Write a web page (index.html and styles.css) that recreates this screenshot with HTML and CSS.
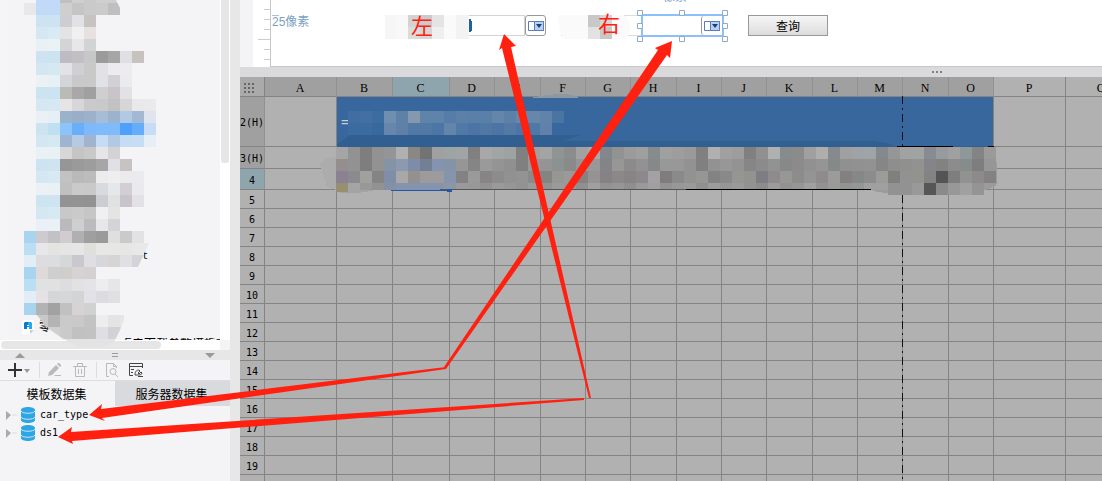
FILE: index.html
```html
<!DOCTYPE html>
<html lang="zh-CN">
<head>
    <meta charset="UTF-8">
    <meta name="viewport" content="width=device-width, initial-scale=1.0">
    <title>报表设计器</title>
    <link rel="stylesheet" href="styles.css">
</head>
<body>
    <div class="designer">
        <aside class="sidebar">
            <!-- Template tree -->
            <div class="tree-pane">
                <div class="tree-body">
                    <svg class="mosaic tree-mosaic" id="tree-mosaic" width="160" height="348" aria-hidden="true"></svg>
                    <span class="tree-tail">t</span>
                    <span class="tree-item">
                        <svg width="12" height="14" viewBox="0 0 12 14" aria-hidden="true">
                            <path d="M0 0h12v10l-4 4H0z" fill="#fff"/>
                            <path d="M12 10l-4 4v-4z" fill="#ccc"/>
                            <path d="M2 9V3l1-1h3v3H5v1h1v1H5v2z" fill="#0b78cf"/>
                            <path d="M6 2h3l1 1v6H7V7H6V6h1V5H6z" fill="#21aaf0"/>
                        </svg>
                        <span>零</span>
                    </span>
                    <span class="tree-cut">点击下载参数模板文件</span>
                </div>
                <div class="tree-vscroll"><div class="vthumb"></div></div>
                <div class="tree-hscroll"><div class="hthumb"></div></div>
            </div>

            <!-- Datasets -->
            <div class="dataset-pane">
                <div class="splitter">
                    <svg width="10" height="5" viewBox="0 0 10 5" aria-hidden="true"><path d="M0 5l5-5 5 5z" fill="#9a9a9a"/></svg>
                    <svg width="6" height="5" viewBox="0 0 6 5" aria-hidden="true"><path d="M0 0h6v1H0zM0 3h6v1H0z" fill="#9a9a9a"/></svg>
                    <svg width="10" height="5" viewBox="0 0 10 5" aria-hidden="true"><path d="M0 0h10L5 5z" fill="#9a9a9a"/></svg>
                </div>
                <div class="toolbar">
                    <button class="tool add" aria-label="添加">
                        <svg width="24" height="16" viewBox="0 0 24 16" fill="none" aria-hidden="true">
                            <path d="M7 1v14M0 8h14" stroke="#333" stroke-width="2"/>
                            <path d="M16 7h6l-3 4z" fill="#999"/>
                        </svg>
                    </button>
                    <button class="tool edit" aria-label="编辑">
                        <svg width="16" height="16" viewBox="0 0 16 16" aria-hidden="true">
                            <path d="M1 14l1-4 7-7 3 3-7 7zM10 2l1-1h1l2 2v1l-1 1zM8 13h6v1H7z" fill="#b9b9b9"/>
                        </svg>
                    </button>
                    <button class="tool remove" aria-label="删除">
                        <svg width="16" height="16" viewBox="0 0 16 16" fill="none" stroke="#b9b9b9" aria-hidden="true">
                            <path d="M1 4.500h14M5.500 4V1.500h5V4M3.500 5v9.500h9V5M6.500 7v5M9.500 7v5"/>
                        </svg>
                    </button>
                    <button class="tool preview" aria-label="预览">
                        <svg width="16" height="16" viewBox="0 0 16 16" fill="none" stroke="#b9b9b9" aria-hidden="true">
                            <path d="M5 14.500H2.500v-13h7l3 3V6M9.500 1.500v3h3M11 12l3 3"/>
                            <circle cx="9" cy="9.500" r="3"/>
                        </svg>
                    </button>
                    <button class="tool link" aria-label="连接">
                        <svg width="16" height="16" viewBox="0 0 16 16" fill="none" stroke="#444" aria-hidden="true">
                            <path d="M5 13.500H1.500v-12h13V6M1 4.500h13M3 7.500h3M3 10.500h2M10 14.500h5"/>
                            <path d="M7 13c0-4 2-5 4-5l1 1-2 2 1 1 2-2 1 1c0 2-3 2-4 2z"/>
                        </svg>
                    </button>
                </div>
                <div class="tabs">
                    <button class="tab active">模板数据集</button>
                    <button class="tab">服务器数据集</button>
                </div>
                <ul class="datasets">
                    <li>
                        <svg width="34" height="18" viewBox="0 0 34 18" aria-hidden="true">
                            <path d="M0 5l5 4-5 5z" fill="#aaa"/><path d="M6 9h5" stroke="#ddd"/>
                            <path d="M15 4c0-4 14-4 14 0v10c0 4-14 4-14 0z" fill="#2ea6e6"/>
                            <path d="M15 5c1 3 13 3 14 0M15 11c1 3 13 3 14 0" fill="none" stroke="#c9e9fa"/>
                        </svg>
                        <a href="#car_type">car_type</a>
                    </li>
                    <li>
                        <svg width="34" height="18" viewBox="0 0 34 18" aria-hidden="true">
                            <path d="M0 5l5 4-5 5z" fill="#aaa"/><path d="M6 9h5" stroke="#ddd"/>
                            <path d="M15 4c0-4 14-4 14 0v10c0 4-14 4-14 0z" fill="#2ea6e6"/>
                            <path d="M15 5c1 3 13 3 14 0M15 11c1 3 13 3 14 0" fill="none" stroke="#c9e9fa"/>
                        </svg>
                        <a href="#ds1">ds1</a>
                    </li>
                </ul>
            </div>
        </aside>
        <div class="gutter"></div>

        <main class="main">
            <!-- Parameter form -->
            <section class="form-pane">
                <div class="ruler">
                    <svg width="12" height="66" viewBox="0 0 12 66" stroke="#ccc" aria-hidden="true">
                        <path d="M6 9.500h6M6 19.500h6M6 29.500h6M0 39.500h12M6 49.500h6M6 59.500h6"/>
                    </svg>
                </div>
                <div class="form-canvas">
                    <span class="measure measure-left">25像素</span>
                    <span class="measure measure-top">像素</span>

                    <div class="combo combo-left">
                        <input id="left-value" type="text" aria-label="左">
                        <button class="drop" aria-label="选择左">
                            <svg width="16" height="10" viewBox="0 0 16 10" aria-hidden="true">
                                <path d="M.5.5h15v9H.5z" fill="#fff" stroke="#5a7db5"/><path d="M6.500.5h9v9h-9z" fill="#b7d2f2" stroke="#5a7db5"/><path d="M8 3h6l-3 4z" fill="#1d3c7c"/>
                            </svg>
                        </button>
                    </div>
                    <svg class="mosaic mosaic-left" id="mosaic-left" width="90" height="24" aria-hidden="true"></svg>
                    <label class="mark mark-left" for="left-value">左</label>

                    <div class="label-line"></div>
                    <svg class="mosaic mosaic-right" id="mosaic-right" width="84" height="24" aria-hidden="true"></svg>
                    <label class="mark mark-right" for="right-value">右</label>
                    <div class="combo combo-right">
                        <input id="right-value" type="text" aria-label="右">
                        <button class="drop" aria-label="选择右">
                            <svg width="16" height="10" viewBox="0 0 16 10" aria-hidden="true">
                                <path d="M.5.5h15v9H.5z" fill="#fff" stroke="#5a7db5"/><path d="M6.500.5h9v9h-9z" fill="#b7d2f2" stroke="#5a7db5"/><path d="M8 3h6l-3 4z" fill="#1d3c7c"/>
                            </svg>
                        </button>
                    </div>
                    <svg class="handles" width="91" height="32" viewBox="0 0 91 32" fill="#fff" stroke="#8fabc6" aria-hidden="true">
                        <path d="M.5.5h5v5h-5zM42.500.5h5v5h-5zM85.500.5h5v5h-5zM.5 13.500h5v5h-5zM85.500 13.500h5v5h-5zM.5 26.500h5v5h-5zM42.500 26.500h5v5h-5zM85.500 26.500h5v5h-5z"/>
                    </svg>

                    <button class="query">查询</button>
                </div>
            </section>
            <div class="pane-divider"><i></i><i></i><i></i></div>

            <!-- Report sheet -->
            <section class="sheet">
                <table class="grid">
                    <colgroup id="cols"></colgroup>
                    <thead><tr id="head"></tr></thead>
                    <tbody id="rows"></tbody>
                </table>
                <svg class="mosaic sheet-mosaic" id="sheet-mosaic" width="690" height="120" aria-hidden="true"></svg>
                <svg class="page-break" width="1" height="404" aria-hidden="true">
                    <path d="M.5 19v50M.5 118v286" stroke="#111" stroke-dasharray="8 4 2 4"/>
                </svg>
            </section>
        </main>

        <svg class="arrows" width="1102" height="481" viewBox="0 0 1102 481" fill="#ff2010" aria-hidden="true">
            <path d="M504 34L516 46L511 47L591 398L589 398L502 48L499 50z"/>
            <path d="M672 41L670 58L667 55L446 369L444 367L658 50L655 48z"/>
            <path d="M89 415L102 404L101 409L446 367L446 369L102 418L105 421z"/>
            <path d="M58 437L72 427L71 432L584 398L584 400L72 441L73 444z"/>
        </svg>
    </div>
    <script src="designer.js"></script>
</body>
</html>
```

FILE: styles.css
```css
* {
    box-sizing: border-box;
}

body {
    margin: 0;
    font-family: "Liberation Sans", "Noto Sans CJK SC", sans-serif;
    font-size: 12px;
    color: #000;
    background-color: #f4f4f7;
}

button, input {
    font: inherit;
    color: inherit;
    margin: 0;
    padding: 0;
    border: none;
    border-radius: 0;
    background: none;
}

svg {
    display: block;
}

.designer {
    position: relative;
    display: flex;
    height: 100vh;
    overflow: hidden;
}

/* Sidebar */
.sidebar {
    flex: 0 0 230px;
    display: flex;
    flex-direction: column;
    min-height: 0;
}

.tree-pane {
    flex: 1;
    min-height: 0;
    display: grid;
    grid-template-columns: 1fr 10px;
    grid-template-rows: 1fr 10px;
    position: relative;
}

.tree-body {
    overflow: hidden;
    border-left: 8px solid #f5f5f8;
}

.tree-vscroll {
    background-color: #fff;
    padding: 0 1px;
}

.vthumb {
    height: 48%;
    background-color: #e6e6e6;
    border-radius: 0 0 3px 3px;
}

.tree-hscroll {
    background-color: #fff;
    padding: 1px;
}

.hthumb {
    width: 160px;
    height: 8px;
    background-color: #e6e6e6;
    border-radius: 4px;
}

.mosaic {
    position: absolute;
    shape-rendering: crispEdges;
}

.tree-mosaic {
    left: 0;
    top: 0;
    z-index: 1;
    clip-path: polygon(0 0, 116px 0, 120px 8px, 160px 8px, 160px 243px, 149px 243px, 138px 267px, 124px 267px, 124px 320px, 120px 330px, 114px 342px, 102px 347px, 78px 347px, 62px 338px, 46px 327px, 37px 315px, 0 315px);
}

.tree-tail {
    position: absolute;
    left: 142px;
    top: 250px;
    font: 10px/12px "DejaVu Sans Mono", monospace;
}

.tree-item {
    position: absolute;
    left: 22px;
    top: 320px;
    display: flex;
    gap: 5px;
    line-height: 14px;
}

.tree-cut {
    position: absolute;
    left: 120px;
    top: 338px;
    width: 100px;
    height: 2px;
    overflow: hidden;
    white-space: nowrap;
    line-height: 12px;
}

.dataset-pane {
    flex: 0 0 131px;
}

.splitter {
    display: flex;
    justify-content: space-between;
    align-items: center;
    height: 10px;
    padding: 0 15px;
    background-color: #e7e7e7;
}

.toolbar {
    display: flex;
    align-items: center;
    height: 21px;
    padding-left: 8px;
    border-bottom: 1px solid #ddd;
}

.tool {
    height: 16px;
}

.add {
    margin-right: 7px;
}

.edit, .preview {
    border-left: 1px solid #ddd;
    padding-left: 7px;
}

.edit {
    margin-right: 9px;
}

.remove, .preview {
    margin-right: 8px;
}

.tabs {
    display: flex;
    height: 25px;
}

.tab {
    flex: 1;
    padding-right: 2px;
    background-color: #d9dadd;
}

.tab.active {
    background-color: #f4f4f7;
}

.datasets {
    list-style: none;
    margin: 0;
    padding: 0 6px;
}

.datasets li {
    display: flex;
    align-items: center;
    height: 18px;
}

.datasets a {
    color: #000;
    text-decoration: none;
    font: 10px/18px "DejaVu Sans Mono", monospace;
}

.gutter {
    flex: 0 0 10px;
    background-color: #e7e7e7;
}

/* Parameter form */
.main {
    flex: 1;
    min-width: 0;
    display: flex;
    flex-direction: column;
}

.form-pane {
    display: flex;
    height: 67px;
    border-left: 13px solid #f4f4f7;
    background-color: #fff;
}

.ruler {
    width: 17px;
    padding-left: 5px;
}

.form-canvas {
    flex: 1;
    position: relative;
    overflow: hidden;
    border-left: 1px solid #c8c8ca;
    border-bottom: 1px solid #c8c8ca;
}

.measure {
    position: absolute;
    color: #7ba0c4;
    line-height: 14px;
    white-space: nowrap;
}

.measure-left {
    left: 1px;
    top: 15px;
}

.measure-left::before {
    content: "";
    position: absolute;
    left: 0;
    top: 0;
    width: 7px;
    border-top: 1px solid #a9c2da;
}

.measure-top {
    left: 392px;
    top: -10px;
}

.combo {
    position: absolute;
    display: flex;
}

.combo input {
    flex: 1;
    min-width: 0;
    background-color: #fff;
}

.combo-left {
    left: 116px;
    top: 15px;
    width: 159px;
    height: 21px;
}

.combo-left input {
    border: 1px solid #d3d3d3;
}

.combo-right {
    left: 370px;
    top: 14px;
    width: 83px;
    height: 23px;
    border: 2px solid #8bc1fb;
}

.drop {
    display: flex;
    align-items: center;
    justify-content: center;
    width: 21px;
    border: 1px solid #999;
    border-radius: 3px;
    background-color: #fff;
}

.combo-right .drop {
    border-width: 0 0 0 1px;
}

.mosaic-left {
    left: 113px;
    top: 15px;
}

.mosaic-right {
    left: 287px;
    top: 15px;
}

.label-line {
    position: absolute;
    left: 290px;
    top: 15px;
    width: 80px;
    height: 21px;
    border: 1px solid #ddd;
    border-right: none;
}

.mark {
    position: absolute;
    color: #ff2010;
    font-size: 22px;
    line-height: 24px;
}

.mark-left {
    left: 140px;
    top: 15px;
}

.mark-right {
    left: 327px;
    top: 13px;
}

.handles {
    position: absolute;
    left: 366px;
    top: 10px;
    pointer-events: none;
}

.query {
    position: absolute;
    left: 477px;
    top: 15px;
    width: 80px;
    height: 21px;
    border: 1px solid #999;
    background: linear-gradient(#f6f6f6, #dcdcdc);
}

.pane-divider {
    display: flex;
    justify-content: center;
    align-items: center;
    gap: 2px;
    height: 10px;
    padding-left: 532px;
    background-color: #dadadc;
}

.pane-divider i {
    width: 2px;
    height: 2px;
    background-color: #808080;
}

/* Report sheet */
.sheet {
    flex: 1;
    position: relative;
    overflow: hidden;
    background-color: #b1b1b1;
}

.grid {
    table-layout: fixed;
    width: 898px;
    border-collapse: separate;
    border-spacing: 0;
    font: 10px/14px "DejaVu Sans Mono", monospace;
}

.grid th, .grid td {
    height: 19px;
    padding: 3px 0 0;
    border-right: 1px solid #848484;
    border-bottom: 1px solid #848484;
    font-weight: normal;
    text-align: center;
    white-space: nowrap;
}

.grid thead th {
    height: 20px;
    padding: 3px 1px 0 0;
    font: 12px/14px "Liberation Serif", serif;
}

.grid .used {
    background-color: #a0a0a0;
    border-right-color: #919191;
}

.grid .current {
    background-color: #8fa5ad;
}

.grid thead .corner {
    padding: 3px 4px 0;
    background-color: #aaa;
}

.grid .row-2 {
    height: 50px;
}

.grid .row-3 {
    height: 22px;
}

.grid .row-4 {
    height: 21px;
}

.grid .title-cell {
    padding: 0 0 0 4px;
    color: #ccc;
    text-align: left;
    font-size: 14px;
    background-color: #37679d;
    border-bottom-color: #325f92;
}

.sheet-mosaic {
    left: 80px;
    top: 0;
}

.page-break {
    position: absolute;
    left: 662px;
    top: 0;
}

.arrows {
    position: absolute;
    left: 0;
    top: 0;
    pointer-events: none;
    z-index: 2;
}
```

FILE: designer.js
```javascript
const BLOCK = 12;

const columns = [
    ['A', 72], ['B', 56], ['C', 57], ['D', 45], ['E', 46], ['F', 45],
    ['G', 45], ['H', 46], ['I', 45], ['J', 45], ['K', 46], ['L', 45],
    ['M', 45], ['N', 46], ['O', 45], ['P', 72], ['Q', 72]
];

function buildGrid() {
    const cols = columns.map(c => `<col style="width:${c[1]}px">`).join('');
    document.getElementById('cols').innerHTML = '<col style="width:25px">' + cols;

    const dots = '<svg width="11" height="11" viewBox="0 0 11 11" stroke="#666" stroke-width="2" stroke-dasharray="2 2">' +
        '<path d="M0 1h11M0 5h11M0 9h11"/></svg>';
    document.getElementById('head').innerHTML = `<th class="corner">${dots}</th>` + columns.map(([name], i) => {
        const cls = (i < 15 ? 'used' : '') + (name === 'C' ? ' current' : '');
        return `<th class="${cls}">${name}</th>`;
    }).join('');

    let html = '';
    for (let r = 2; r <= 19; r++) {
        const cls = [r < 5 ? 'used row-' + r : '', r === 4 ? 'current' : ''].join(' ');
        html += `<tr><th class="${cls}">${r < 4 ? r + '(H)' : r}</th>`;
        // the title in row 2 spans B to O
        html += r === 2
            ? '<td></td><td class="title-cell" colspan="14">=</td><td></td><td></td>'
            : '<td></td>'.repeat(columns.length);
        html += '</tr>';
    }
    html += '<tr><th></th>' + '<td></td>'.repeat(columns.length) + '</tr>';
    document.getElementById('rows').innerHTML = html;
}

// rows: one string per line of blocks, "-" leaves a block empty
function blocks(x, y, rows, lastHeight) {
    let out = '';
    rows.forEach((row, r) => {
        const h = lastHeight && r === rows.length - 1 ? lastHeight : BLOCK;
        row.split(' ').forEach((c, i) => {
            if (c !== '-') {
                out += `<rect x="${x + i * BLOCK}" y="${y + r * BLOCK}" width="${BLOCK}" height="${h}" fill="#${c}"/>`;
            }
        });
    });
    return out;
}

const treeRows = [
    '- c0daf7 c0daf7 c0c0c0 cfcfcf cacaca cfcfcf cfcfcf',
    'e8e8ea c0daf7 c0daf7 cfcfcf c5c5c5 cacaca cbcbcb bfbfbf',
    '- cce4f1 cce4f1 cecdd2 e2e1e6 c7c3c1',
    '- d5e7f2 d8eaf4 e4e3e3 f0f0f2 e7e2e1',
    '- e9f1f5 e9f2f4 d3d4d6 e7e7ea d2d3d5',
    '- cde3f1 cce4f0 bfbbc4 c3bec3 c8c7c8 9b9b9c a6a6a6 e0e0e4 c6c2c0',
    '- d4e6f1 d6e9f3 e3e3e5 d0cfd3 c9c9ca e2e2e5 edebee edebed',
    '- ebf1f5 e7f1f5 d4d5d9 c9c9ca c9c9c9 e1e2e5 d1d0d4 ebebed',
    '- cce3f0 cce4f1 babab7 a9a7aa a0a0a0 cfcfd1 c8c4c8 e2e1e4',
    '- d5e7f2 d6e9f3 e7e4e5 d8d6d9 cacaca c9c9c9 c2c2c2 d6d6d6 e9e8ea ebeaeb',
    '- ebf0f5 e4eff6 9ab3ca 99aec8 9cb1cb a7bcd6 9cb3cd b2c9e3 a3b8d5 dfe4ed',
    '- cce4ef bee0f1 8bc3fb 69aef9 7db9fb 7fbafb 7fbafb 4ea0fc 63adfb c8ddf5',
    '- d2e7f1 d5e9f2 9fb4d0 b5cae4 a0b4d0 c5dcf4 b2c9e4 c5dcf5 c7ddf6 e6eef6',
    '- e9f1f4 e9f1f4 d7d7d7 c5c5c5 c9c9c9 e6e6e9 d3d3d5',
    '- cce4f1 cee5f1 969696 9a9a9a 9d9d9d a6a6a6 e1e0e5 c7c3c2',
    '- d5e7f2 d7e9f2 c2c2c3 b9b9b9 bcbcbc ecebee eeedf0 ebeaed ebeaed',
    '- ebf1f4 e9f1f4 c0c0c1 cacacb c9c9ca d9dadd e4e8ea d1cfd4 eaeaec',
    '- cde4f1 cee4f0 939393 939393 929292 cdccd2 e0e1e1 c9c4c9 e2e1e3',
    '- d5e7f2 d7e9f2 c8c8c9 cacacb c6c6c6 f0f0f3 e6e3e3',
    '- e9f0f7 eaf1f6 bababc cfcfd1 bcbcbe e7e7ea d3d4d7',
    'a8d4ef cdcbd0 c2c1c4 d0cccf b0b0b1 9f9f9f 9a9a9a dfdfe0 cac9cc e2e2e5',
    'badef2 e7e6e8 e3e3e2 e5e5e3 e7e6e7 dfdfdc e7e7e6 e7e7e6 e6e6e5 e8e8e9 e8e8e9',
    'e2edf5 dddcde dcdde0 d5d7d9 cac8cf dfdfe3 d6d7da d6d4d4 dfdfe4 d3d4d9',
    'a8d4ef dfd9da cfcfd0 cfceca d7d3d5 d3d1d2',
    'badef2 e0e2e1 e2e1e2 dddddf e1e2e2 e4e3e8 ededf0 e6e6e9',
    'e2edf5 e6e1e5 d4d6d7 d7d7d8 d3d4d5 e1e1e7 dcdbdf e0e0e3',
    'a8d4ef b3b3b4 a2a2a3 c1c1bf d7d3d4 d2d1d2',
    '- c8c8c8 b4b4b4 cacaca c9c9ca c3c3c3 ededef e4e4e4 e6e6e6',
    '- - cfcfcf cacaca c1c1c2 c2c2c2 dedee3 d1d2d6 d6d6d8',
    '- - - e3e3e3 e3e3e3 e3e3e3 e3e3e3 e3e3e3'
];

const titleRows = [
    '406da2 446fa3 3d6ca1 708fb0 5e81a8 8598ad 6083a9 6083a9 567da9 5c80a8 5a7fa8 5a7fa8 6486ab 5c80a8 6787ab 6686aa 6183a9 4a75a3',
    '3c6ba0 3c6ba0 38689e 6686ab 5e80a9 5278a5 5278a5 4c76a6 6385a9 5179a5 4c74a4 5078a4 4c74a4 5479a5 4c74a4 5078a5 6081aa'
];

const detailRows = [
    'a5a5a5 929292 7e7e7e 929292 949596 b0b0b0 8a8784 737373 a0a0a0 9ea3a3 a0a4a6 808080 a8a8a8 a1a5a5 9fa2a2 808080 a0a0a0 ' +
    'a4a4a4 8f9595 8c8c8c a2a2a2 a9a9a9 82878d 929292 9b9b9b 9f9f9f 868b8e a0a0a0 9d9d9d 9a9a9a 808080 b0b0b0 a0a0a0 9d9d9d 808080 909090 b0b0b0 868b8e 8b8b8b a0a0a0 b0aeaa 848a8e ' +
    'a0a0a0 9fa3a5 9fa5a6 83898d 969696 a0a3a1 a0a3a1 888c92 989b9e a0a0a0 8e9799 848484 9a9a9a',
    '958e8e 929292 7e7e7e 929292 8494a6 8c9ab0 7d8da8 737f94 8494b0 8494a6 969696 858585 9a9a9a 949494 909090 808080 989898 ' +
    '949494 8c9292 8a8a8a 969696 989898 828487 979797 8b8b8b 929292 868889 989898 989898 929292 808080 929292 979797 939393 868686 8b8b8b 929292 878989 8b8b8b 919191 959595 858988 ' +
    '909090 919191 929292 868686 8e8e8e 90908e 929290 848588 828282 8c8c8c 868c8c 7e7e7e 969696',
    '8a8293 8c8a8f a0a19e 858383 7f8ea6 a8a8a8 94908e 9c9a9a 9c9a9a 8494ac 848182 9a9a98 868485 8e8c8b 919191 939393 8a8a8a ' +
    '858484 969693 9a9a99 848283 969292 848283 8c8889 868485 8c888d a2a2a2 807c7e 8b898a 929292 969692 848282 8a8889 959592 929291 7d7e83 8e8a8d 979794 8d8b8c 949492 8f8b8c 9b9b9a ' +
    '848080 848888 8e8b8f 9b9b97 817e7e 929292 92928e 838383 545456 7e7e7e 929290 8e8a8b 828282',
    '969070 a4a4a4 989898 929292 8490a6 8494b0 8494b0 8494b0 8494b0 8c96a4 9a9a9a 989898 929292 9a9a9a 969696 929292 9a9a9a ' +
    '929292 9a9a9a 969696 909090 a0a0a0 939393 969696 8f8f8f 9a9a9a a0a0a0 939393 989898 9a9a9a 909090 9c9c9c 969696 9a9a9a 929292 8c8c8c 9c9c9c 929292 969696 a0a0a0 929292 9a9a9a ' +
    '929492 969696 a0a0a0 a0a0a0'
];

function drawMosaics() {
    document.getElementById('tree-mosaic').innerHTML = blocks(24, -9, treeRows);

    document.getElementById('mosaic-left').innerHTML =
        '<rect x="1" width="84" height="24" fill="#f6f6f6"/>' +
        blocks(12, 0, [
            'f8f8f8 d3d3d3 cacaca e4e4e4 fafafa f3f3f3',
            'f8f8f8 dcdcdc d6d6d6 efefef fafafa f3f3f3'
        ]) +
        '<path d="M85 4h2q3 8 0 13h-2z" fill="#1f6199"/>';

    document.getElementById('mosaic-right').innerHTML =
        '<path d="M0 0h66q6 6 6 12t-4 12H6Q0 18 0 0z" fill="#fafafa"/>' +
        blocks(30, 0, ['c8c8c8 d6d6d6', 'e2e2e2 c8c8c8']);

    // coordinates inside the sheet overlay, B starts at x = 17
    document.getElementById('sheet-mosaic').innerHTML =
        '<path d="M30 58h230l-16 6h190 115q16 0 26 5H17v-2z" fill="#325f92"/>' +
        '<path d="M210 21q40-8 49 0z" fill="#8c98a4"/>' +
        blocks(28, 34, titleRows) +
        '<path d="M0 89q0-8 16-9h4v33q-16-1-14-8z" fill="#acacac"/>' +
        '<path d="M551 113q14 5 54 5 70-1 72-12v-20q-2-7-9-6H551z" fill="#9b9b9b"/>' +
        '<path d="M16 113q5 7 40 0z" fill="#a3a3a3"/>' +
        blocks(16, 70, detailRows, 7) +
        blocks(568, 106, ['929292 929292 999999 565656 8a8a8a 989898 a0a0a0 949494']) +
        '<rect x="16" y="110" width="12" height="5" fill="#969070"/>' +
        '<path d="M120 112.500h246" stroke="#555"/><path d="M366 112.500h185M577 69.500h56M668 69.500h6" stroke="#000"/>' +
        '<path d="M71 113h58v2h-2v-1H71zM127 112h5v3h-5z" fill="#2358a5"/>';
}

buildGrid();
drawMosaics();
```
